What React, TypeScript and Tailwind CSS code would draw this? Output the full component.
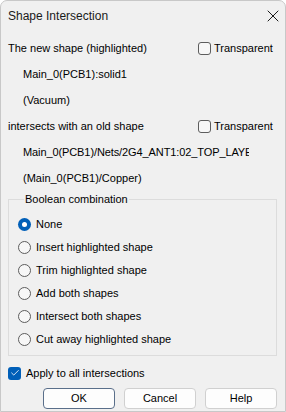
import { X, Check } from 'lucide-react';

const OPTIONS = [
  'None',
  'Insert highlighted shape',
  'Trim highlighted shape',
  'Add both shapes',
  'Intersect both shapes',
  'Cut away highlighted shape',
];

function Box({ checked = false }: { checked?: boolean }) {
  return checked ? (
    <span className="w-[13px] h-[13px] rounded-[3px] bg-[#005fb8] flex items-center justify-center shrink-0">
      <Check size={10} strokeWidth={2} className="text-white" />
    </span>
  ) : (
    <span className="w-[13px] h-[13px] rounded-[3px] border border-[#5d5d5d] bg-[#f7f7f7] shrink-0" />
  );
}

function Radio({ checked = false }: { checked?: boolean }) {
  return checked ? (
    <span className="w-[13px] h-[13px] rounded-full bg-[#005fb8] flex items-center justify-center shrink-0">
      <span className="w-[5px] h-[5px] rounded-full bg-white" />
    </span>
  ) : (
    <span className="w-[13px] h-[13px] rounded-full border border-[#5d5d5d] bg-[#f7f7f7] shrink-0" />
  );
}

function Row({ children, indent = false }: { children: React.ReactNode; indent?: boolean }) {
  return (
    <div className={`h-[26px] flex items-center ${indent ? 'pl-[15px]' : ''}`}>{children}</div>
  );
}

export default function App() {
  return (
    <div
      className="w-[286px] h-[412px] bg-[#f0f0f0] text-[11px] text-black border border-[#c8c8c8] rounded-t-[7px] overflow-hidden flex flex-col"
      style={{ fontFamily: '"Liberation Sans", Arial, sans-serif' }}
    >
      {/* Title bar */}
      <div className="h-[29px] flex items-center justify-between pl-[7px] pr-[2px] shrink-0">
        <span className="text-[12px] text-[#1a1a1a]">Shape Intersection</span>
        <X size={20} strokeWidth={1.2} className="text-[#1a1a1a]" />
      </div>

      <div className="flex flex-col px-[7px] pt-[5px]">
        <Row>
          <span className="flex-1">The new shape (highlighted)</span>
          <label className="flex items-center gap-[3px] w-[80px]">
            <Box />
            Transparent
          </label>
        </Row>
        <Row indent>Main_0(PCB1):solid1</Row>
        <Row indent>(Vacuum)</Row>
        <Row>
          <span className="flex-1">intersects with an old shape</span>
          <label className="flex items-center gap-[3px] w-[80px]">
            <Box />
            Transparent
          </label>
        </Row>
        <Row indent>
          <span className="w-[226px] overflow-hidden whitespace-nowrap tracking-[-0.1px]">
            Main_0(PCB1)/Nets/2G4_ANT1:02_TOP_LAYER
          </span>
        </Row>
        <Row indent>(Main_0(PCB1)/Copper)</Row>

        {/* Boolean combination group */}
        <fieldset className="mr-[1px] border border-[#dcdcdc] pl-[9px] pt-[6px] pb-[4px]">
          <legend className="ml-[6px] px-[1px] leading-[16px]">Boolean combination</legend>
          {OPTIONS.map((label, i) => (
            <div key={label} className="h-[23px] flex items-center gap-[5px]">
              <Radio checked={i === 0} />
              {label}
            </div>
          ))}
        </fieldset>

        <div className="mt-[6px] h-[22px] flex items-center gap-[5px]">
          <Box checked />
          Apply to all intersections
        </div>

        <div className="mt-[4px] flex justify-end gap-[9px] pr-[1px]">
          <button className="w-[72px] h-[21px] rounded-[4px] bg-[#fdfdfd] border border-[#5a6f8a]">OK</button>
          <button className="w-[72px] h-[21px] rounded-[4px] bg-[#fdfdfd] border border-[#d0d0d0]">Cancel</button>
          <button className="w-[72px] h-[21px] rounded-[4px] bg-[#fdfdfd] border border-[#d0d0d0]">Help</button>
        </div>
      </div>
    </div>
  );
}
